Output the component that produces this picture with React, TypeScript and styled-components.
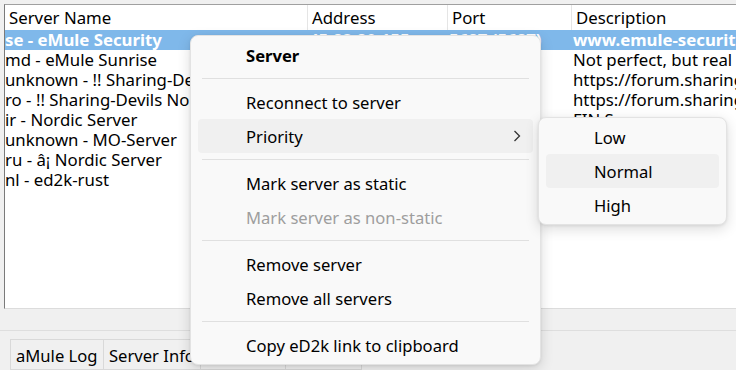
import React, { FC } from 'react';
import styled, { createGlobalStyle } from 'styled-components';

const GlobalStyle = createGlobalStyle`
  html, body {
    margin: 0;
    padding: 0;
    background: #f0f0f0;
  }
  body {
    font-family: 'Noto Sans', 'Open Sans', 'Liberation Sans', sans-serif;
    font-size: 16.6px;
    color: #000;
  }
`;

const Window = styled.div`
  position: relative;
  width: 736px;
  height: 370px;
  overflow: hidden;
  background: #f0f0f0;
  display: flex;
  flex-direction: column;
`;

const ListFrame = styled.div`
  margin: 4px 0 0 4px;
  height: 303px;
  background: #fff;
  border-top: 1px solid #a0a0a0;
  border-left: 1px solid #7a7a7a;
  border-bottom: 1px solid #dcdcdc;
  overflow: hidden;
  font-size: 16.8px;
`;

const columns = '302px 140px 124px 200px';

const HeaderRow = styled.div`
  display: grid;
  grid-template-columns: ${columns};
  height: 25px;
  background: #fff;
`;

const HeaderCell = styled.div<{ $first?: boolean }>`
  display: flex;
  align-items: center;
  padding-left: 4px;
  border-left: ${(p) => (p.$first ? 'none' : '1px solid #e5e5e5')};
  white-space: nowrap;
  overflow: hidden;
`;

const Row = styled.div<{ $selected?: boolean }>`
  display: grid;
  grid-template-columns: ${columns};
  height: 20px;
  line-height: 20px;
  background: ${(p) => (p.$selected ? '#7fb8ea' : 'transparent')};
  color: ${(p) => (p.$selected ? '#fff' : '#000')};
  font-weight: ${(p) => (p.$selected ? 700 : 400)};
`;

const Cell = styled.div<{ $first?: boolean }>`
  padding: 0 ${(p) => (p.$first ? '0' : '8px')} 0 ${(p) => (p.$first ? '0' : '2px')};
  white-space: nowrap;
  overflow: hidden;
  text-overflow: ellipsis;
`;

const BottomArea = styled.div`
  flex: 1;
  display: flex;
  flex-direction: column;
`;

const Divider = styled.div`
  margin-top: 21px;
  height: 1px;
  background: #dedede;
`;

const TabBar = styled.div`
  display: flex;
  margin: 8px 0 0 10px;
`;

const Tab = styled.div<{ $w: number }>`
  width: ${(p) => p.$w}px;
  height: 31px;
  box-sizing: border-box;
  border: 1px solid #d9d9d9;
  border-right: none;
  padding: 4px 0 0 5px;
  background: #f0f0f0;
  white-space: nowrap;
  overflow: hidden;
  &:last-child {
    border-right: 1px solid #d9d9d9;
  }
`;

const Menu = styled.div<{ $x: number; $y: number; $w: number }>`
  position: absolute;
  left: ${(p) => p.$x}px;
  top: ${(p) => p.$y}px;
  width: ${(p) => p.$w}px;
  box-sizing: border-box;
  padding: 2px 7px 2px 7px;
  background: #f9f9f9;
  border: 1px solid #e3e3e3;
  border-radius: 8px;
  box-shadow: 0 4px 14px rgba(0, 0, 0, 0.14), 0 1px 3px rgba(0, 0, 0, 0.08);
`;

const MenuItem = styled.div<{ $active?: boolean; $disabled?: boolean; $bold?: boolean }>`
  position: relative;
  height: 34px;
  display: flex;
  align-items: center;
  padding-left: 48px;
  border-radius: 4px;
  background: ${(p) => (p.$active ? '#f0f0f0' : 'transparent')};
  color: ${(p) => (p.$disabled ? '#9e9e9e' : '#000')};
  font-weight: ${(p) => (p.$bold ? 700 : 400)};
  white-space: nowrap;
`;

const Separator = styled.div`
  height: 1px;
  margin: 6px 4px;
  background: #e0e0e0;
`;

const Chevron = styled.svg`
  position: absolute;
  right: 12px;
  top: 11px;
`;

const servers = [
  ['se - eMule Security', '45.82.80.155', '5687 (5687)', 'www.emule-security.org'],
  ['md - eMule Sunrise', '176.123.5.89', '4725 (4725)', 'Not perfect, but real'],
  ['unknown - !! Sharing-Devils No.1 !!', '91.208.184.143', '4232 (4233)', 'https://forum.sharing-devils.to'],
  ['ro - !! Sharing-Devils No.2 !!', '85.239.33.123', '4232 (4233)', 'https://forum.sharing-devils.to'],
  ['ir - Nordic Server', '145.239.2.134', '4232 (4232)', 'FIN Server'],
  ['unknown - MO-Server', '212.83.184.152', '7111 (7111)', ''],
  ['ru - â¡ Nordic Server', '5.45.85.226', '6584 (6584)', ''],
  ['nl - ed2k-rust', '45.154.64.97', '4661 (4661)', ''],
];

const App: FC = () => (
  <>
    <GlobalStyle />
    <Window>
      <ListFrame>
        <HeaderRow>
          <HeaderCell $first>Server Name</HeaderCell>
          <HeaderCell>Address</HeaderCell>
          <HeaderCell>Port</HeaderCell>
          <HeaderCell>Description</HeaderCell>
        </HeaderRow>
        {servers.map((s, i) => (
          <Row key={i} $selected={i === 0}>
            <Cell $first>{s[0]}</Cell>
            <Cell>{s[1]}</Cell>
            <Cell>{s[2]}</Cell>
            <Cell>{s[3]}</Cell>
          </Row>
        ))}
      </ListFrame>
      <BottomArea>
        <Divider />
        <TabBar>
          <Tab $w={93}>aMule Log</Tab>
          <Tab $w={97}>Server Info</Tab>
          <Tab $w={85}>ED2K Info</Tab>
          <Tab $w={77}>Kad Info</Tab>
        </TabBar>
      </BottomArea>

      <Menu $x={190} $y={35} $w={351}>
        <MenuItem $bold>Server</MenuItem>
        <Separator />
        <MenuItem>Reconnect to server</MenuItem>
        <MenuItem $active>
          Priority
          <Chevron width="8" height="12" viewBox="0 0 8 12">
            <polyline points="1.5,1 6.5,6 1.5,11" fill="none" stroke="#333" strokeWidth="1.3" />
          </Chevron>
        </MenuItem>
        <Separator />
        <MenuItem>Mark server as static</MenuItem>
        <MenuItem $disabled>Mark server as non-static</MenuItem>
        <Separator />
        <MenuItem>Remove server</MenuItem>
        <MenuItem>Remove all servers</MenuItem>
        <Separator />
        <MenuItem>Copy eD2k link to clipboard</MenuItem>
      </Menu>

      <Menu $x={538} $y={117} $w={189}>
        <MenuItem>Low</MenuItem>
        <MenuItem $active>Normal</MenuItem>
        <MenuItem>High</MenuItem>
      </Menu>
    </Window>
  </>
);

export default App;
